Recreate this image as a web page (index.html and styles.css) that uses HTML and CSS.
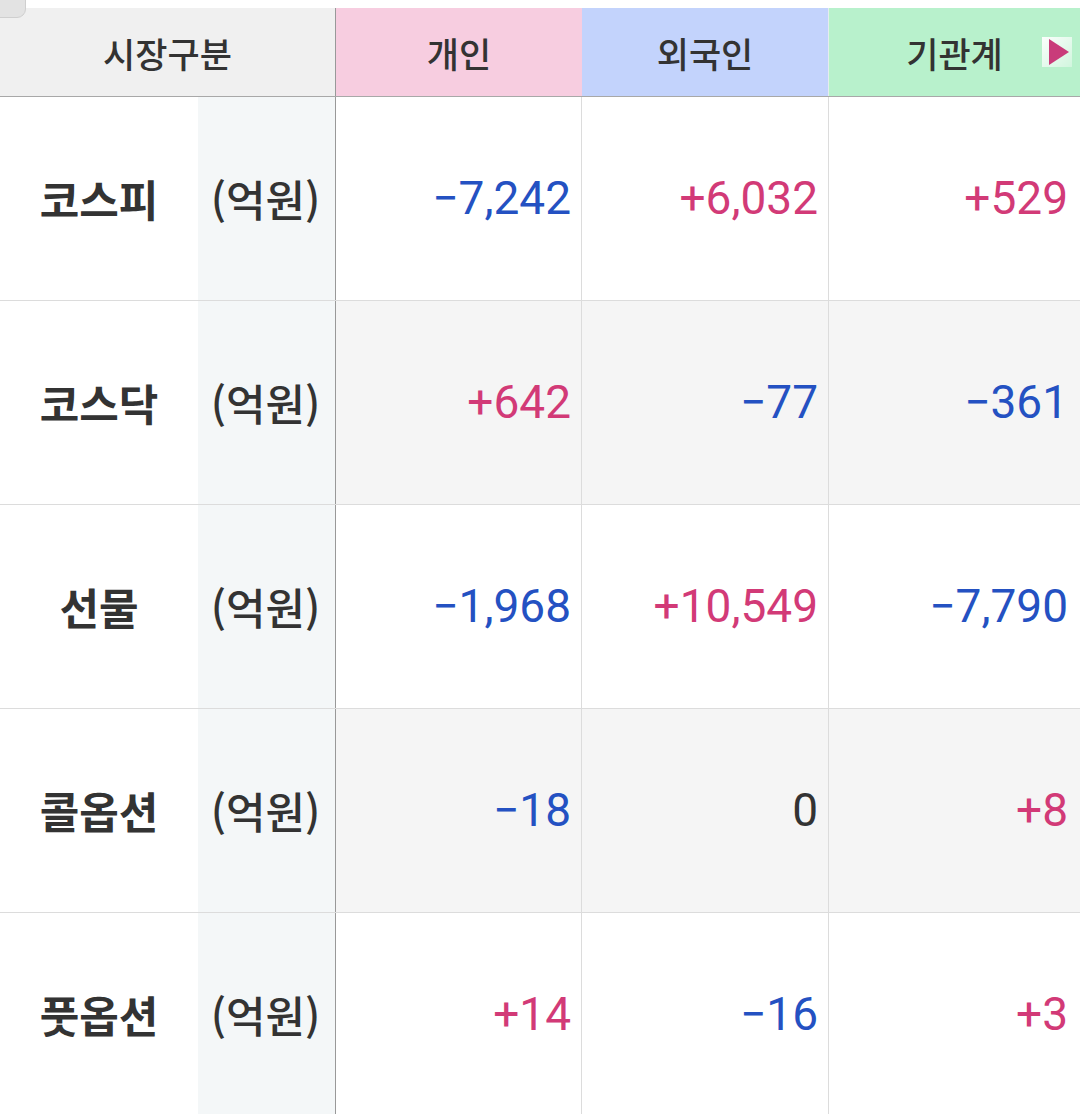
FILE: index.html
```html
<!DOCTYPE html>
<html lang="ko">
<head>
<meta charset="utf-8">
<link rel="stylesheet" href="styles.css">
</head>
<body>
<div class="page">
  <div class="corner"></div>
  <div class="table">
    <div class="row head">
      <div class="hcell market">시장구분</div>
      <div class="hcell indiv">개인</div>
      <div class="hcell foreign">외국인</div>
      <div class="hcell inst">기관계
        <span class="more"><svg width="22" height="26" viewBox="0 0 22 26"><polygon points="1,0 21,13 1,26" fill="#c93c7a"/></svg></span>
      </div>
    </div>
    <div class="row">
      <div class="cell label">코스피</div>
      <div class="cell unit">(억원)</div>
      <div class="cell num down">−7,242</div>
      <div class="cell num up">+6,032</div>
      <div class="cell num up last">+529</div>
    </div>
    <div class="row alt">
      <div class="cell label">코스닥</div>
      <div class="cell unit">(억원)</div>
      <div class="cell num up">+642</div>
      <div class="cell num down">−77</div>
      <div class="cell num down last">−361</div>
    </div>
    <div class="row">
      <div class="cell label">선물</div>
      <div class="cell unit">(억원)</div>
      <div class="cell num down">−1,968</div>
      <div class="cell num up">+10,549</div>
      <div class="cell num down last">−7,790</div>
    </div>
    <div class="row alt">
      <div class="cell label">콜옵션</div>
      <div class="cell unit">(억원)</div>
      <div class="cell num down">−18</div>
      <div class="cell num flat">0</div>
      <div class="cell num up last">+8</div>
    </div>
    <div class="row">
      <div class="cell label">풋옵션</div>
      <div class="cell unit">(억원)</div>
      <div class="cell num up">+14</div>
      <div class="cell num down">−16</div>
      <div class="cell num up last">+3</div>
    </div>
  </div>
</div>
</body>
</html>
```

FILE: styles.css
```css
* { box-sizing: border-box; }
html, body { margin: 0; padding: 0; background: #fff; }
body {
  font-family: "Noto Sans CJK KR", "Noto Sans", sans-serif;
  color: #333;
  width: 1080px;
  height: 1114px;
  overflow: hidden;
}
.page {
  position: relative;
  padding-top: 8px;
}
.corner {
  position: absolute;
  left: -10px;
  top: -12px;
  width: 36px;
  height: 30px;
  background: #e3e3e3;
  border: 1px solid #cfcfcf;
  border-radius: 0 0 9px 0;
  z-index: 2;
}
.row {
  display: grid;
  grid-template-columns: 198px 138px 246px 247px 251px;
  height: 204px;
  border-bottom: 1px solid #dcdcdc;
}
.row.head {
  grid-template-columns: 336px 246px 247px 251px;
  height: 89px;
  border-bottom: 1px solid #a8a8a8;
}
.hcell {
  display: flex;
  align-items: center;
  justify-content: center;
  font-size: 35px;
  font-weight: 500;
  color: #333;
  position: relative;
}
.market { background: #f0f0f0; border-right: 1px solid #999; }
.indiv { background: #f7cde0; }
.foreign { background: #c3d3fc; border-right: 1px solid #e4ecef; }
.inst { background: #b8f1cc; }
.more {
  position: absolute;
  left: 213px;
  top: 29px;
  width: 30px;
  height: 30px;
  display: flex;
  align-items: center;
  justify-content: center;
  background: linear-gradient(135deg, rgba(255,255,255,0.95), rgba(255,255,255,0.35));
}
.more svg { display: block; margin-left: 4px; }
.cell {
  display: flex;
  align-items: center;
  padding-bottom: 2px;
}
.label {
  justify-content: center;
  font-size: 43px;
  font-weight: 700;
  color: #333;
  background: #fff;
}
.unit {
  justify-content: center;
  font-size: 43px;
  font-weight: 500;
  color: #333;
  background: #f4f7f8;
  border-right: 1px solid #999;
  padding-right: 2px;
}
.num {
  justify-content: flex-end;
  font-family: Roboto, "Noto Sans", sans-serif;
  font-size: 46px;
  font-weight: 400;
  padding-right: 10px;
  border-right: 1px solid #dcdcdc;
}
.num.last { border-right: none; padding-right: 12px; }
.alt .num { background: #f5f5f5; }
.down { color: #2451c2; }
.up { color: #d23a77; }
.flat { color: #333; }
```
